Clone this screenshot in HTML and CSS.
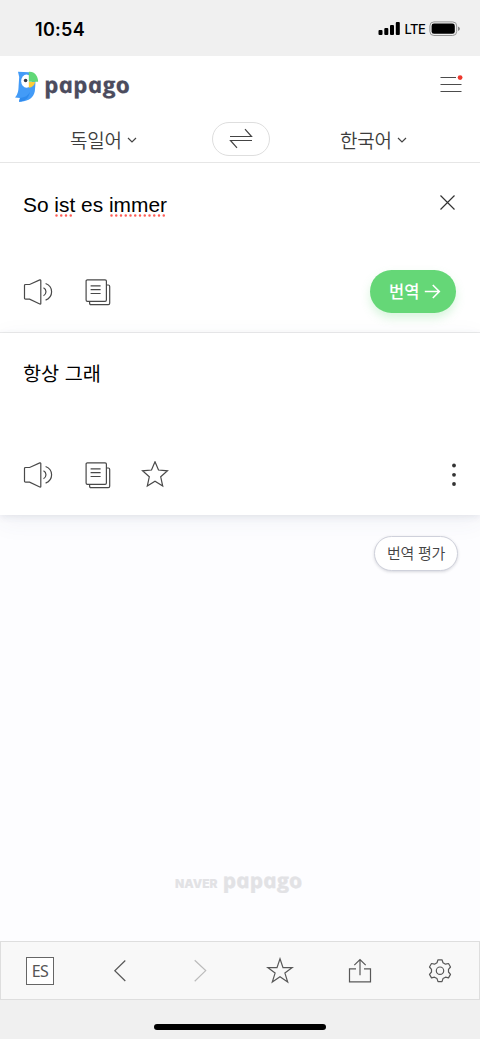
FILE: index.html
```html
<!DOCTYPE html>
<html lang="ko">
<head>
<meta charset="utf-8">
<meta name="viewport" content="width=device-width">
<title>papago</title>
<link rel="stylesheet" href="styles.css">
</head>
<body>
<svg class="defs" width="0" height="0" aria-hidden="true">
  <symbol id="speaker" viewBox="0 0 30 28"><path d="M1.5 6.6q0-1.100 1.100-1.100h4L16.800.9q1-.3 1 .6v23q0 .9-1 .5L6.600 20.200h-4q-1.100 0-1.100-1.200zM20.500 8.800c3.300 1.700 3.300 6.300 0 8M22.600 4.500c8 3.100 8 13.500 0 16.600"/></symbol>
  <symbol id="copy" viewBox="0 0 28 28"><rect x="1.100" y=".8" width="20.300" height="21.500" rx="1.300"/><path d="M21.800 6h1.500q1.400 0 1.400 1.400v16.800q0 1.400-1.400 1.400H5.900q-1.300 0-1.300-1.400v-1.600M5.600 6.800h10M5.600 10.600h10M5.600 14.500h10"/></symbol>
  <symbol id="star" viewBox="0 0 28 28"><path d="M14 .8l3.500 8.200 9 .8-6.800 6 2 9.300-7.700-4.800-7.700 4.800 2-9.300-6.800-6 9-.8z"/></symbol>
</svg>
<main class="screen">
  <div class="status">
    <span class="time">10:54</span>
    <div class="signals">
      <svg width="22" height="16" viewBox="0 0 22 16"><g fill="#000"><rect x=".5" y="9" width="4" height="5" rx="1"/><rect x="6.300" y="7" width="4" height="7" rx="1"/><rect x="12" y="4" width="4" height="10" rx="1"/><rect x="17.800" y="1" width="4" height="13" rx="1"/></g></svg>
      <span class="lte">LTE</span>
      <svg width="32" height="16" viewBox="0 0 32 16"><rect x=".9" y=".9" width="26.800" height="13.600" rx="4" fill="none" stroke="#959595"/><rect x="2.600" y="2.600" width="23.200" height="10.200" rx="2.400" fill="#000"/><path d="M29 5.500q2 1 2 2.300t-2 2.300z" fill="#888"/></svg>
    </div>
  </div>
  <header class="header">
    <div class="brand">
      <svg width="25" height="32" viewBox="0 0 25 32">
        <path d="M3 .8L14 1.200C21 3 21 10 20 18c0 6-4 11-11 12.200l-5 .5L5 27 0 26.400C3 23 3.400 20 3.600 15L4.200 6z" fill="#439bf7"/>
        <path d="M5 27c5-.5 8-2.500 10-6-1 5-4 9.500-11 9.700z" fill="#2f8bee"/>
        <ellipse cx="11.500" cy="10.200" rx="5.300" ry="6.600" fill="#fff"/>
        <path d="M13.800.9c5.700-.7 9.300 4.500 9.300 9.900h-9.300z" fill="#61d877"/>
        <path d="M13.800 10.900h6.200c0 3-2.700 5.300-6.200 5.900z" fill="#ffcd38"/>
        <circle cx="10.600" cy="9.500" r="1.800" fill="#353847"/>
      </svg>
      <span class="wordmark">papago</span>
    </div>
    <svg class="menu" width="25" height="24" viewBox="0 0 25 24"><path d="M.5 5.500h15.500M.5 12.500h21M.5 19.500h21" stroke="#4c4c4c" stroke-width="1.200"/><circle cx="20.100" cy="5.600" r="2.400" fill="#ed392e"/></svg>
  </header>
  <nav class="langs">
    <div class="lang"><span>독일어</span><svg width="10" height="8" viewBox="0 0 10 8"><path d="M1 2l4 4 4-4"/></svg></div>
    <div class="swap"><svg width="24" height="22" viewBox="0 0 24 22"><path d="M1 8.500h21.500L16 1.200M23 12.500H1.500L8 19.800"/></svg></div>
    <div class="lang"><span>한국어</span><svg width="10" height="8" viewBox="0 0 10 8"><path d="M1 2l4 4 4-4"/></svg></div>
  </nav>
  <section class="source">
    <div class="line"><p class="german">So <span class="misspelt">ist<svg class="dots" width="20" height="3"><path d="M2.500 1.500H18"/></svg></span> es <span class="misspelt">immer<svg class="dots" width="58" height="3"><path d="M2.500 1.500H56"/></svg></span></p>
      <svg class="close" width="16" height="16" viewBox="0 0 16 16"><path d="M.5 .5l14 14M14.500 .5l-14 14"/></svg></div>
    <div class="tools">
      <svg class="icon" width="30" height="28"><use href="#speaker"/></svg>
      <svg class="icon copy" width="28" height="28"><use href="#copy"/></svg>
      <div class="translate"><span>번역</span><svg width="17" height="16" viewBox="0 0 17 16"><path d="M.8 7.500h14M8.800 1L15.300 7.500l-6.500 6.500"/></svg></div>
    </div>
  </section>
  <section class="result">
    <p class="korean">항상 그래</p>
    <div class="tools">
      <svg class="icon" width="30" height="28"><use href="#speaker"/></svg>
      <svg class="icon copy" width="28" height="28"><use href="#copy"/></svg>
      <svg class="icon favorite" width="28" height="28"><use href="#star"/></svg>
      <svg class="more" width="6" height="24" viewBox="0 0 6 24"><circle cx="3" cy="2.500" r="1.900"/><circle cx="3" cy="11.800" r="1.900"/><circle cx="3" cy="21" r="1.900"/></svg>
    </div>
  </section>
  <section class="blank">
    <div class="rating">번역 평가</div>
    <footer class="credit"><span class="naver">NAVER</span><span class="papago">papago</span></footer>
  </section>
  <nav class="toolbar">
    <div class="tab"><span class="engine">ES</span></div>
    <div class="tab"><svg width="28" height="28" viewBox="0 0 28 28"><path d="M19.300 3.500L8.800 13.700l10.500 10.300"/></svg></div>
    <div class="tab disabled"><svg width="28" height="28" viewBox="0 0 28 28"><path d="M8.700 3.200l11 10.400-11 10.600"/></svg></div>
    <div class="tab"><svg width="28" height="28" viewBox="0 0 28 28"><path d="M14 1.800l3 8.800h9.300l-7.400 5.500 2.800 9-7.700-5.400-7.700 5.400 2.800-9-7.400-5.500H11z"/></svg></div>
    <div class="tab"><svg width="28" height="28" viewBox="0 0 28 28"><path d="M10 11.800H3.500v13h21v-13H18M14 18.300V2.500M8.300 8.200L14 2.500 19.700 8.200"/></svg></div>
    <div class="tab"><svg width="28" height="28" viewBox="0 0 28 28"><path d="M12 2.800h4l1 3 2.500 1.400 3-.7 2 3.500-2 2.400v2.600l2 2.400-2 3.500-3-.7-2.500 1.400-1 3h-4l-1-3-2.500-1.400-3 .7-2-3.500 2-2.400v-2.600l-2-2.400 2-3.500 3 .7L11 5.800z" stroke-linejoin="round"/><circle cx="14" cy="13.700" r="3.700"/></svg></div>
  </nav>
  <div class="home"><div class="bar"></div></div>
</main>
</body>
</html>
```
FILE: styles.css
```css
* { box-sizing: border-box; }
body { margin: 0; font-family: "Noto Sans CJK KR", sans-serif; }
p { margin: 0; }
svg { display: block; flex: none; }
.defs { position: absolute; }
.screen { width: 480px; height: 1039px; display: flex; flex-direction: column; background: #fdfdff; overflow: hidden; }
.status { height: 56px; flex: none; background: #f0f0f0; display: flex; justify-content: space-between; align-items: flex-start; padding: 18px 19px 0 35px; }
.time { font: 600 18px/23px Inter, sans-serif; letter-spacing: .3px; }
.signals { display: flex; padding-top: 3px; }
.lte { font: 500 13px/16px Inter, sans-serif; width: 29px; padding-left: 4.500px; letter-spacing: -.6px; }
.header { height: 53px; flex: none; background: #fff; display: flex; justify-content: space-between; padding: 16px 15px 0; }
.brand { display: flex; gap: 4px; height: 32px; margin-top: -1px; }
.wordmark { font: italic 700 22.500px/28px "Open Sans", sans-serif; transform: scaleX(1.09) skewX(12deg); transform-origin: left center; color: #4c4c5e; -webkit-text-stroke: .2px #4c4c5e; }
.langs { height: 54px; flex: none; background: #fff; border-bottom: 1px solid #e6e6e6; display: grid; grid-template-columns: 212px 58px 210px; padding-top: 12.500px; }
.lang { display: flex; align-items: center; gap: 5px; height: 36px; padding-left: 70px; color: #3d3d3d; font-size: 19px; font-weight: 350; letter-spacing: -.2px; line-height: 36px; }
.lang svg { fill: none; stroke: #444; stroke-width: 1.200; }
.swap { height: 34px; border: 1px solid #dedede; border-radius: 17px; display: flex; align-items: center; justify-content: center; }
.swap svg { fill: none; stroke: #444; stroke-width: 1.200; }
.source { height: 170px; flex: none; background: #fff; border-bottom: 1px solid #ededed; padding: 30px 24px 0 23px; }
.line { display: flex; justify-content: space-between; height: 77px; }
.german { font: 20.900px/24px "Liberation Sans", sans-serif; }
.misspelt { position: relative; }
.dots { position: absolute; left: 0; bottom: -1px; fill: none; stroke: #ff5c55; stroke-width: 2.500; stroke-linecap: round; stroke-dasharray: 0 4.750; }
.close { margin-top: 2px; fill: none; stroke: #333; stroke-width: 1.200; }
.tools { display: flex; align-items: flex-start; }
.icon { fill: none; stroke: #494949; stroke-width: 1.200; margin-top: 9px; }
.copy { margin-left: 31.500px; }
.favorite { margin-left: 28.500px; margin-top: 8px; }
.translate { margin-left: auto; width: 86px; height: 43px; border-radius: 22px; background: #65d777; box-shadow: 0 5px 10px #65d77740; color: #fff; font-size: 16.500px; font-weight: 500; line-height: 43px; display: flex; align-items: center; gap: 5px; padding-left: 19px; }
.translate svg { fill: none; stroke: #fff; stroke-width: 1.600; }
.result { height: 182px; flex: none; background: #fff; padding: 24px 23px 0; box-shadow: 0 2px 7px #4550701c, 0 6px 24px #45507010; }
.korean { height: 95.500px; font-size: 19.700px; line-height: 31px; }
.more { margin: 10px 0 0 auto; fill: #333; }
.blank { flex: 1; display: flex; flex-direction: column; align-items: flex-end; justify-content: space-between; padding: 21px 22px 43px; }
.rating { height: 35px; width: 84px; border: 1px solid #cfd1db; border-radius: 18px; background: #fff; box-shadow: 0 1px 3px #30364a30; color: #444; font-size: 15px; font-weight: 350; letter-spacing: -.3px; line-height: 31px; text-align: center; }
.credit { align-self: flex-start; margin-left: 153px; display: flex; align-items: baseline; gap: 4px; color: #e2e2e5; font-family: Inter, sans-serif; line-height: 28px; }
.naver { font-size: 12px; font-weight: 900; }
.papago { font: italic 700 20.500px/28px "Open Sans", sans-serif; transform: scaleX(1.11) skewX(12deg); transform-origin: left center; -webkit-text-stroke: .4px #e2e2e5; }
.toolbar { height: 59px; flex: none; background: #f8f8f8; border: 1px solid #dedede; display: grid; grid-template-columns: repeat(6, 80px); margin: 0; }
.tab { display: grid; place-items: center; margin-left: -1px; margin-right: 1px; }
.tab svg { fill: none; stroke: #585858; stroke-width: 1.200; }
.tab.disabled svg { stroke: #bbb; }
.engine { width: 28px; height: 28px; border: 1px solid #666; background: #fff; color: #555; font: 16px/26px "Noto Sans", sans-serif; letter-spacing: -.6px; text-align: center; }
.home { height: 39px; flex: none; background: #f0f0f0; padding-top: 24px; }
.bar { width: 172px; height: 6px; border-radius: 3px; background: #000; margin: 0 auto; }
```
